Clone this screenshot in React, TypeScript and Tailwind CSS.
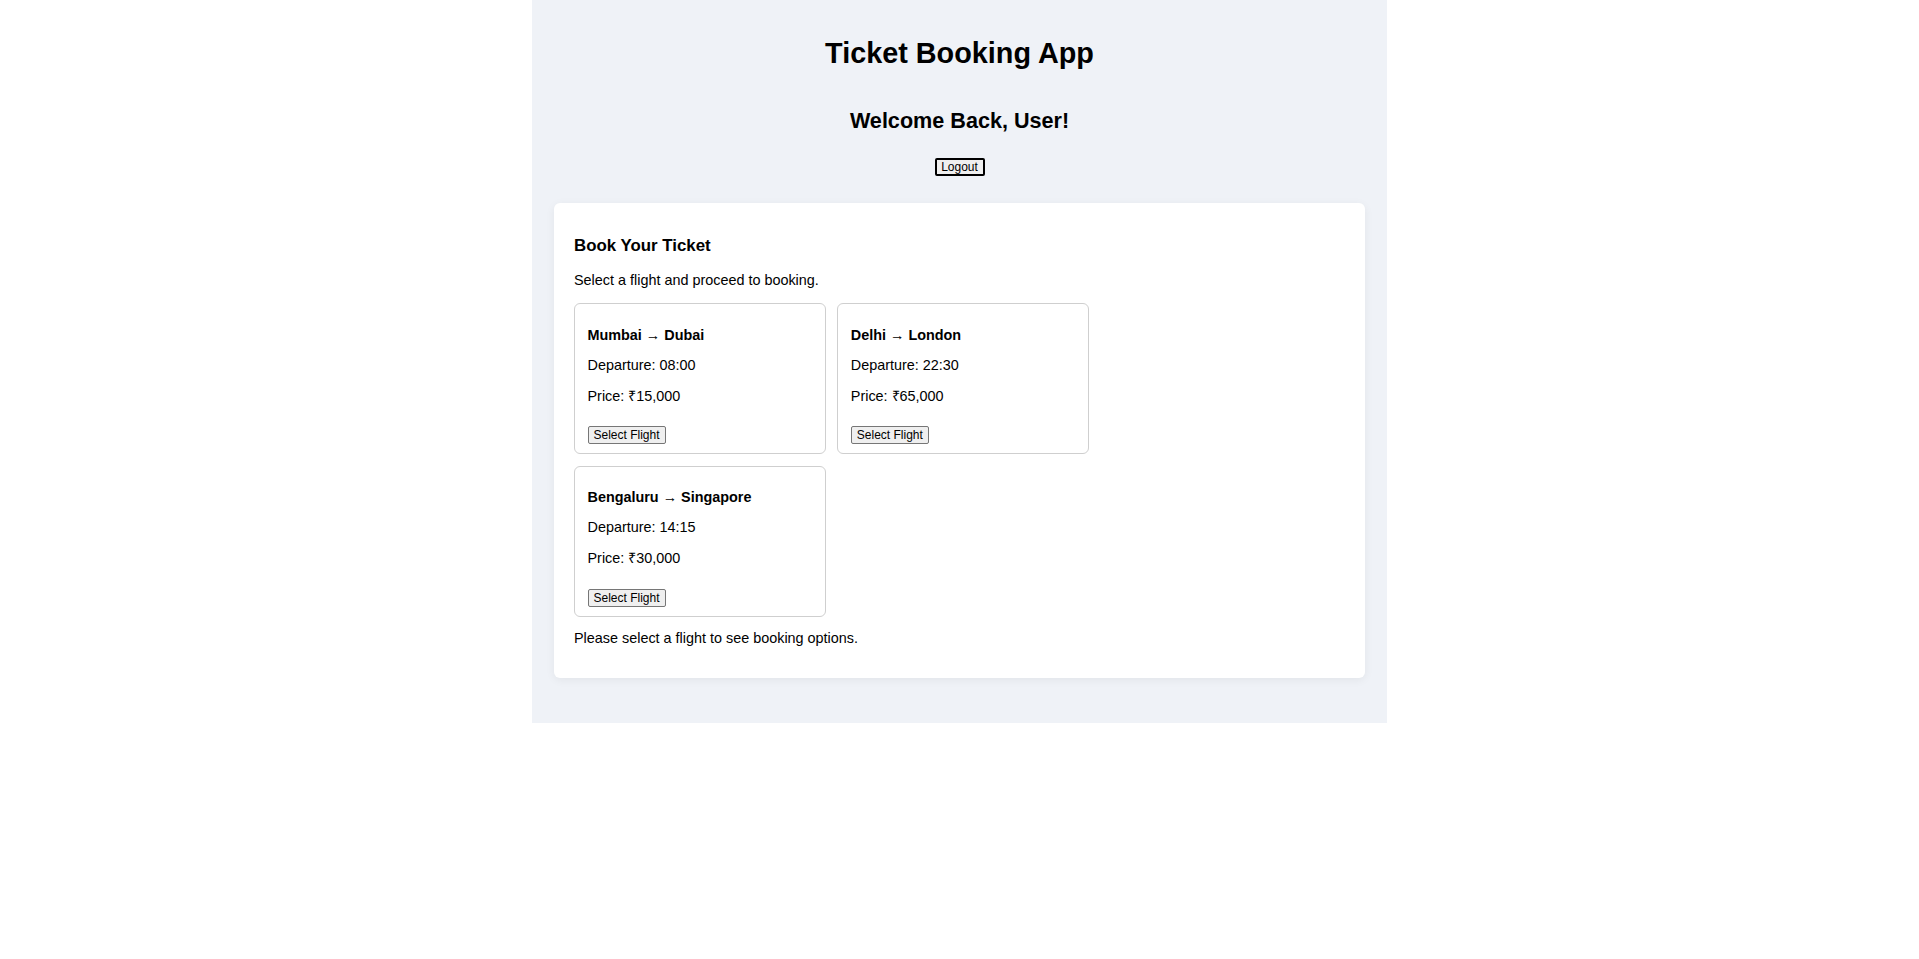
import React from 'react';

interface Flight {
  id: number;
  from: string;
  to: string;
  departure: string;
  price: string;
}

const flights: Flight[] = [
  { id: 1, from: 'Mumbai', to: 'Dubai', departure: '08:00', price: '₹15,000' },
  { id: 2, from: 'Delhi', to: 'London', departure: '22:30', price: '₹65,000' },
  { id: 3, from: 'Bengaluru', to: 'Singapore', departure: '14:15', price: '₹30,000' },
];

function FlightCard({ flight }: { flight: Flight }) {
  return (
    <div className="w-[252px] h-[151px] border border-[#cfcfcf] rounded-[6px] px-[12.5px] pt-[22.4px] pb-[7px] flex flex-col">
      <h4 className="text-[14.4px] leading-[16.5px] font-bold">
        {flight.from} → {flight.to}
      </h4>
      <p className="mt-[13.5px] text-[14.4px] leading-[16.5px]">Departure: {flight.departure}</p>
      <p className="mt-[15px] text-[14.4px] leading-[16.5px]">Price: {flight.price}</p>
      <div className="mt-auto">
        <button className="h-[18px] px-[5px] text-[12px] leading-[14px] bg-[#efefef] border border-[#767676] rounded-[2px] text-black">
          Select Flight
        </button>
      </div>
    </div>
  );
}

export default function App() {
  return (
    <div className="min-h-[959px] bg-white font-['Liberation_Sans',Arial,sans-serif] text-black">
      <div className="w-[855px] mx-auto bg-[#eff2f7] px-[22px] pt-[37px] pb-[45px]">
        {/* Header */}
        <h1 className="text-center text-[28.8px] leading-[33px] font-bold">Ticket Booking App</h1>
        <h2 className="mt-[37.5px] text-center text-[21.6px] leading-[25px] font-bold">Welcome Back, User!</h2>
        <div className="mt-[25.5px] flex justify-center">
          <button className="w-[50px] h-[18px] text-[12px] leading-[14px] bg-[#efefef] border-2 border-black rounded-[2px]">
            Logout
          </button>
        </div>

        {/* Booking card */}
        <div className="mt-[27px] bg-white rounded-[6px] shadow-[0_2px_10px_rgba(0,0,0,0.06)] px-[20px] pt-[32.5px] pb-[31px]">
          <h3 className="text-[16.85px] leading-[19.4px] font-bold">Book Your Ticket</h3>
          <p className="mt-[17.5px] text-[14.4px] leading-[16.5px]">Select a flight and proceed to booking.</p>
          <div className="mt-[14.4px] flex flex-wrap gap-[11.3px]">
            {flights.map((f) => (
              <FlightCard key={f.id} flight={f} />
            ))}
          </div>
          <p className="mt-[13.7px] text-[14.4px] leading-[16.5px]">Please select a flight to see booking options.</p>
        </div>
      </div>
    </div>
  );
}
